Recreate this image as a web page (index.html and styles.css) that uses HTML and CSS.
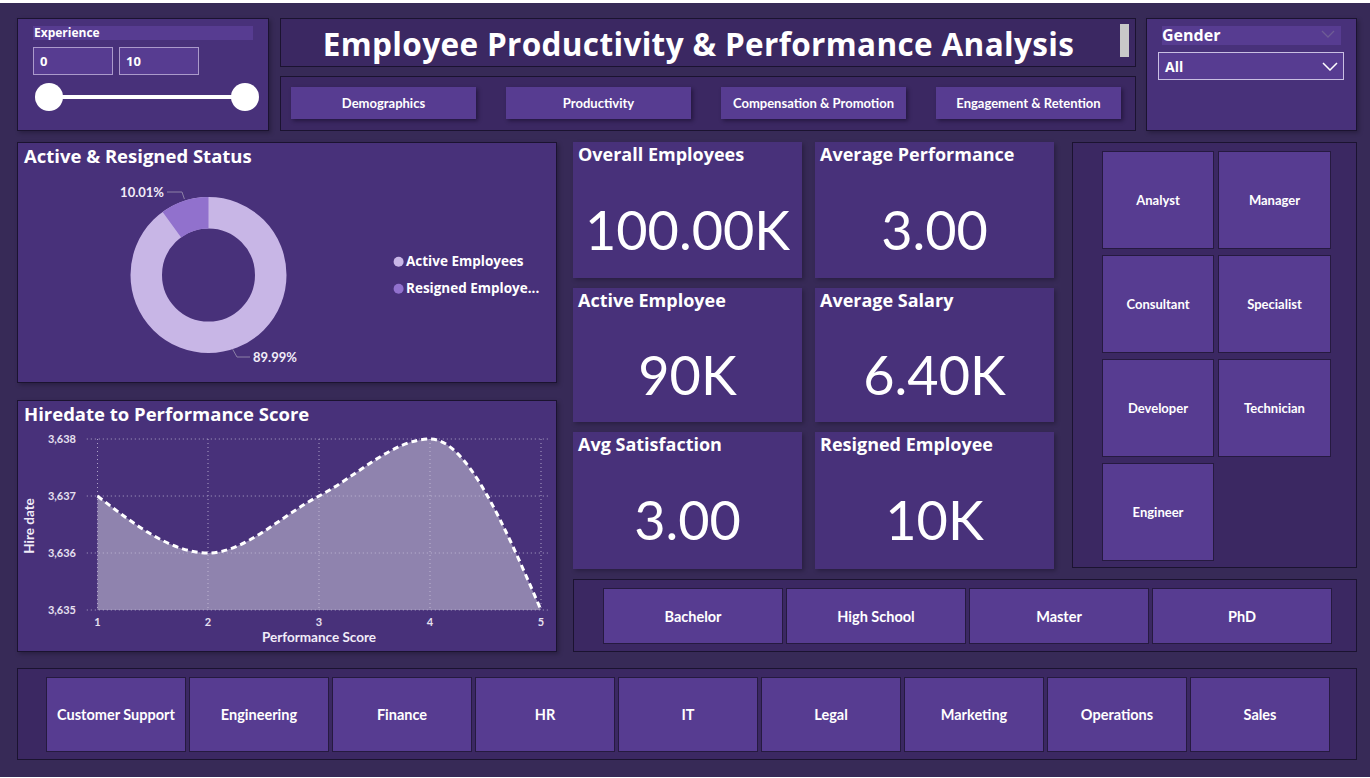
FILE: index.html
```html
<!DOCTYPE html>
<html lang="en">
<head>
<meta charset="utf-8">
<title>Employee Productivity &amp; Performance Analysis</title>
<link rel="stylesheet" href="styles.css">
</head>
<body>
<div class="topstrip"></div>
<div class="dash">
  <div class="row1">
    <div class="panel exp">
      <div class="slicer-head">Experience</div>
      <div class="range-inputs">
        <div class="rin">0</div>
        <div class="rin">10</div>
      </div>
      <div class="slider"><span class="knob"></span><span class="track"></span><span class="knob"></span></div>
    </div>
    <div class="mid">
      <div class="panel dark titlebox">
        <div class="title-wrap"><h1 class="title">Employee Productivity &amp; Performance Analysis</h1></div>
        <div class="scrollbar"></div>
      </div>
      <div class="panel dark nav">
        <div class="navbtn">Demographics</div>
        <div class="navbtn">Productivity</div>
        <div class="navbtn">Compensation &amp; Promotion</div>
        <div class="navbtn">Engagement &amp; Retention</div>
      </div>
    </div>
    <div class="panel gender">
      <div class="gender-head"><span>Gender</span>
        <svg class="chev dim" width="14" height="8" viewBox="0 0 14 8"><polyline points="1,1 7,7 13,1" fill="none" stroke="#6e5c95" stroke-width="1.3"/></svg>
      </div>
      <div class="dropdown"><span>All</span>
        <svg class="chev" width="16" height="9" viewBox="0 0 16 9"><polyline points="1,1 8,8 15,1" fill="none" stroke="#ffffff" stroke-width="1.5"/></svg>
      </div>
    </div>
  </div>

  <div class="row2">
    <div class="leftcol">
      <div class="panel chartpanel donutpanel">
        <div class="ptitle">Active &amp; Resigned Status</div>
        <svg class="chart" width="538" height="212" viewBox="0 0 538 212">
          <circle cx="190.5" cy="105" r="62.25" fill="none" stroke="#c8b6e6" stroke-width="31.5"/>
          <path d="M190.5,27 A78,78 0 0 0 144.65,41.9 L163.17,67.38 A46.5,46.5 0 0 1 190.5,58.5 Z" fill="#9171cd"/>
          <polyline points="149,22 164,22 166.4,29" fill="none" stroke="#8c81a6" stroke-width="1"/>
          <polyline points="214.6,179.2 219,187 232,187" fill="none" stroke="#8c81a6" stroke-width="1"/>
          <text class="dlabel" x="146" y="26.5" text-anchor="end">10.01%</text>
          <text class="dlabel" x="235" y="191.5">89.99%</text>
          <circle cx="380.6" cy="91.7" r="5" fill="#c8b6e6"/>
          <text class="legend" x="388" y="96">Active Employees</text>
          <circle cx="380.6" cy="118.7" r="5" fill="#9171cd"/>
          <text class="legend" x="388" y="123">Resigned Employe...</text>
        </svg>
      </div>
      <div class="panel chartpanel linepanel">
        <div class="ptitle">Hiredate to Performance Score</div>
        <svg class="chart" width="538" height="223" viewBox="0 0 538 223">
          <path d="M79.5,69 C116.3,97.5 153.2,126 190,126 C227,126 264,88.1 301,69 C338,49.9 375,12 412,12 C449,12 486,97.5 523,183 L523,183 L79.5,183 Z" fill="#8f83ae"/>
          <g stroke="#cfc8e0" stroke-width="1" stroke-dasharray="1 3" opacity="0.75">
            <line x1="68.8" y1="12" x2="530.6" y2="12"/>
            <line x1="68.8" y1="69" x2="530.6" y2="69"/>
            <line x1="68.8" y1="126" x2="530.6" y2="126"/>
            <line x1="68.8" y1="183" x2="530.6" y2="183"/>
            <line x1="79.5" y1="12" x2="79.5" y2="183"/>
            <line x1="190" y1="12" x2="190" y2="183"/>
            <line x1="301" y1="12" x2="301" y2="183"/>
            <line x1="412" y1="12" x2="412" y2="183"/>
            <line x1="523" y1="12" x2="523" y2="183"/>
          </g>
          <path d="M79.5,69 C116.3,97.5 153.2,126 190,126 C227,126 264,88.1 301,69 C338,49.9 375,12 412,12 C449,12 486,97.5 523,183" fill="none" stroke="#ffffff" stroke-width="3" stroke-dasharray="6 4"/>
          <text class="axis" x="58" y="16" text-anchor="end">3,638</text>
          <text class="axis" x="58" y="73" text-anchor="end">3,637</text>
          <text class="axis" x="58" y="130" text-anchor="end">3,636</text>
          <text class="axis" x="58" y="187" text-anchor="end">3,635</text>
          <text class="axis" x="79.5" y="199" text-anchor="middle">1</text>
          <text class="axis" x="190" y="199" text-anchor="middle">2</text>
          <text class="axis" x="301" y="199" text-anchor="middle">3</text>
          <text class="axis" x="412" y="199" text-anchor="middle">4</text>
          <text class="axis" x="523" y="199" text-anchor="middle">5</text>
          <text class="axtitle" x="301" y="214.5" text-anchor="middle">Performance Score</text>
          <text class="axtitle" x="0" y="0" text-anchor="middle" transform="translate(16,99) rotate(-90)">Hire date</text>
        </svg>
      </div>
    </div>

    <div class="rightpart">
      <div class="rtop">
        <div class="kpis">
          <div class="card"><div class="ctitle">Overall Employees</div><div class="cval">100.00K</div></div>
          <div class="card"><div class="ctitle">Average Performance</div><div class="cval">3.00</div></div>
          <div class="card"><div class="ctitle">Active Employee</div><div class="cval">90K</div></div>
          <div class="card"><div class="ctitle">Average Salary</div><div class="cval">6.40K</div></div>
          <div class="card"><div class="ctitle">Avg Satisfaction</div><div class="cval">3.00</div></div>
          <div class="card"><div class="ctitle">Resigned Employee</div><div class="cval">10K</div></div>
        </div>
        <div class="panel dark jobs">
          <div class="tile">Analyst</div>
          <div class="tile">Manager</div>
          <div class="tile">Consultant</div>
          <div class="tile">Specialist</div>
          <div class="tile">Developer</div>
          <div class="tile">Technician</div>
          <div class="tile">Engineer</div>
        </div>
      </div>
      <div class="panel dark edu">
        <div class="tile">Bachelor</div>
        <div class="tile">High School</div>
        <div class="tile">Master</div>
        <div class="tile">PhD</div>
      </div>
    </div>
  </div>

  <div class="panel dark depts">
    <div class="tile">Customer Support</div>
    <div class="tile">Engineering</div>
    <div class="tile">Finance</div>
    <div class="tile">HR</div>
    <div class="tile">IT</div>
    <div class="tile">Legal</div>
    <div class="tile">Marketing</div>
    <div class="tile">Operations</div>
    <div class="tile">Sales</div>
  </div>
</div>
</body>
</html>
```

FILE: styles.css
```css
* { box-sizing: border-box; }

html, body {
  margin: 0;
  padding: 0;
  background: #ffffff;
  font-family: "Lato", "Open Sans", "DejaVu Sans", sans-serif;
  color: #ffffff;
}

.topstrip { height: 3px; background: #ffffff; }

.dash {
  width: 1370px;
  height: 774px;
  background: #372a57;
  padding: 15px 13px 0 17px;
  display: flex;
  flex-direction: column;
}

.panel {
  border: 1px solid #1b1330;
  background: #48317a;
}
.panel.dark { background: #3b2862; }

/* ---------- row 1 ---------- */
.row1 {
  display: flex;
  height: 113px;
}

.exp {
  width: 252px;
  margin-right: 11px;
  padding: 7px 15px 0 15px;
  box-shadow: 2px 2px 4px rgba(0,0,0,0.25);
}
.slicer-head {
  height: 14px;
  line-height: 14px;
  font-family: "Open Sans", "Lato", sans-serif;
  font-size: 12px;
  font-weight: 700;
  background: #573c91;
  padding-left: 1px;
}
.range-inputs {
  display: flex;
  gap: 6px;
  margin-top: 7px;
}
.rin {
  width: 80px;
  height: 28px;
  border: 1px solid #ab9acb;
  background: #573c91;
  font-family: "Open Sans", "Lato", sans-serif;
  font-size: 13px;
  font-weight: 700;
  line-height: 26px;
  padding-left: 6px;
}
.slider {
  display: flex;
  align-items: center;
  margin-top: 8px;
  margin-left: 2px;
  width: 224px;
}
.knob {
  width: 28px;
  height: 28px;
  border-radius: 50%;
  background: #ffffff;
  flex: none;
}
.track {
  flex: 1;
  height: 4px;
  background: #ffffff;
  margin: 0 -2px;
}

.mid {
  width: 856px;
  display: flex;
  flex-direction: column;
  gap: 9px;
  margin-right: 10px;
}
.titlebox {
  height: 49px;
  display: flex;
  align-items: flex-start;
}
.title-wrap {
  flex: 1;
  text-align: center;
  padding-left: 2px;
}
.title {
  margin: 4px 0 0 0;
  font-family: "Open Sans", "Lato", sans-serif;
  font-size: 31.5px;
  line-height: 42px;
  font-weight: 700;
  letter-spacing: 0.35px;
  white-space: nowrap;
}
.scrollbar {
  width: 9px;
  height: 33px;
  margin: 5px 6px 0 6px;
  background: #c8c8c8;
}

.nav {
  height: 55px;
  display: flex;
  gap: 30px;
  padding: 10px 0 0 10px;
}
.navbtn {
  width: 185px;
  height: 32px;
  background: #573c91;
  box-shadow: 2px 2px 4px rgba(10,5,25,0.45);
  font-size: 13px;
  font-weight: 700;
  display: flex;
  align-items: center;
  justify-content: center;
}

.gender {
  width: 211px;
  padding: 7px 12px 0 11px;
  box-shadow: 2px 2px 4px rgba(0,0,0,0.25);
}
.gender-head {
  margin-left: 4px;
  margin-right: 3px;
  height: 19px;
  background: #573c91;
  display: flex;
  align-items: center;
  justify-content: space-between;
  font-family: "Open Sans", "Lato", sans-serif;
  font-size: 16px;
  font-weight: 700;
  padding: 0 6px 0 0;
  line-height: 19px;
}
.gender-head .chev { margin-top: -4px; }
.dropdown {
  margin-top: 7px;
  height: 28px;
  border: 1px solid #c9bfe2;
  background: #573c91;
  display: flex;
  align-items: center;
  justify-content: space-between;
  padding: 0 5px 0 6px;
  font-family: "Open Sans", "Lato", sans-serif;
  font-size: 14px;
  font-weight: 700;
}

/* ---------- row 2 ---------- */
.row2 {
  display: flex;
  margin-top: 11px;
  height: 510px;
  gap: 16px;
}
.leftcol {
  width: 540px;
  display: flex;
  flex-direction: column;
  gap: 17px;
}
.chartpanel {
  display: flex;
  flex-direction: column;
  box-shadow: 2px 2px 4px rgba(0,0,0,0.25);
}
.donutpanel { height: 241px; }
.linepanel { height: 252px; }
.ptitle {
  height: 26px;
  line-height: 26px;
  font-family: "Open Sans", "Lato", sans-serif;
  font-size: 18.5px;
  font-weight: 700;
  padding-left: 6px;
  white-space: nowrap;
}
.donutpanel .ptitle { height: 27px; }
.chart { display: block; }

.dlabel {
  font-family: "Lato", "Open Sans", sans-serif;
  font-size: 13px;
  font-weight: 700;
  fill: #f1ecf8;
}
.legend {
  font-family: "Open Sans", "Lato", sans-serif;
  font-size: 13.5px;
  font-weight: 700;
  fill: #ffffff;
}
.axis {
  font-family: "Lato", "Open Sans", sans-serif;
  font-size: 11px;
  font-weight: 700;
  fill: #e6e0f0;
}
.axtitle {
  font-family: "Lato", "Open Sans", sans-serif;
  font-size: 13.5px;
  font-weight: 700;
  fill: #f1ecf8;
}

.rightpart {
  width: 784px;
  display: flex;
  flex-direction: column;
  gap: 10px;
}
.rtop {
  display: flex;
  height: 427px;
  gap: 18px;
}
.kpis {
  display: grid;
  grid-template-columns: 229px 239px;
  grid-template-rows: 136px 134px 137px;
  column-gap: 13px;
  row-gap: 10px;
}
.card {
  background: #48317a;
  box-shadow: 2px 2px 4px rgba(0,0,0,0.25);
  display: flex;
  flex-direction: column;
}
.ctitle {
  font-family: "Open Sans", "Lato", sans-serif;
  font-size: 18px;
  font-weight: 700;
  line-height: 24px;
  padding-left: 5px;
  white-space: nowrap;
}
.cval {
  flex: 1;
  display: flex;
  align-items: center;
  justify-content: center;
  padding-top: 14px;
  font-size: 54px;
  font-weight: 400;
}

.tile {
  background: #573c91;
  border: 1px solid #261a40;
  display: flex;
  align-items: center;
  justify-content: center;
  font-size: 13px;
  font-weight: 700;
  text-align: center;
}

.jobs {
  width: 285px;
  height: 426px;
  display: grid;
  grid-template-columns: 112px 113px;
  grid-auto-rows: 98px;
  column-gap: 4px;
  row-gap: 6px;
  padding: 8px 0 0 29px;
  align-content: start;
}

.edu {
  height: 73px;
  display: flex;
  gap: 3px;
  padding: 8px 0 0 29px;
}
.edu .tile {
  width: 180px;
  height: 56px;
  font-size: 14.5px;
}

/* ---------- row 3 ---------- */
.depts {
  margin-top: 16px;
  height: 92px;
  display: flex;
  gap: 3px;
  padding: 8px 0 0 28px;
}
.depts .tile {
  width: 140px;
  height: 75px;
  font-size: 14.5px;
}
```
